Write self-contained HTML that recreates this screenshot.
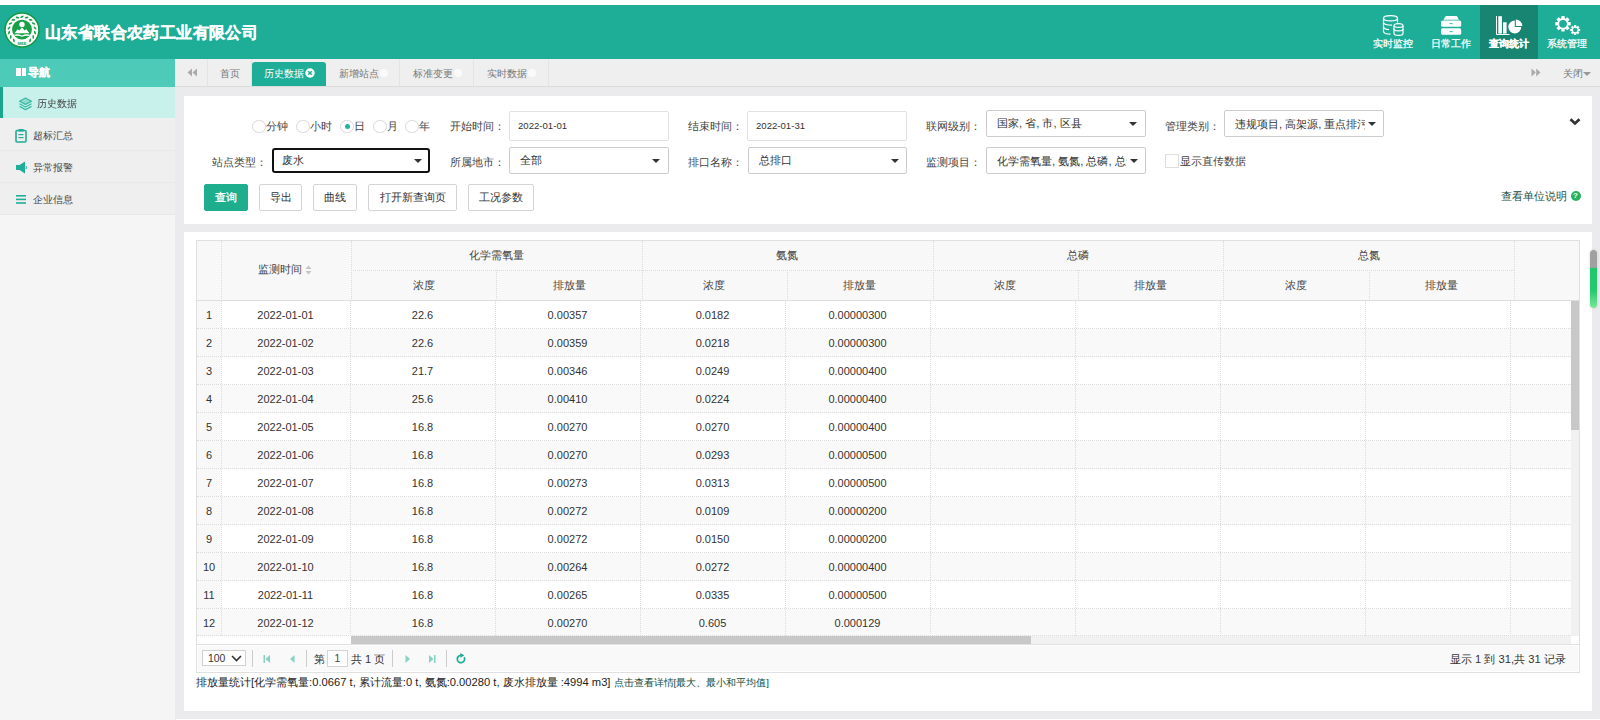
<!DOCTYPE html><html><head><meta charset="utf-8"><title>历史数据</title><style>
*{box-sizing:border-box;margin:0;padding:0}
html,body{width:1600px;height:720px;overflow:hidden;background:#ebebed;font-family:"Liberation Sans",sans-serif;color:#333}
.a{position:absolute}
.t{position:absolute;white-space:nowrap;line-height:1}
#top{left:0;top:0;width:1600px;height:5px;background:#fff}
#hdr{left:0;top:5px;width:1600px;height:54px;background:#1eae98}
#title{left:45px;top:20px;font-size:16px;font-weight:bold;color:#fff;letter-spacing:0.4px;-webkit-text-stroke:0.3px #fff}
.menu{position:absolute;top:0;width:58px;height:54px;color:#fff;text-align:center}
.menu .lbl{position:absolute;left:0;width:58px;top:33px;font-size:10.4px;line-height:11px;-webkit-text-stroke:0.25px #fff}
.menu svg{position:absolute;left:0;top:0}
#side{left:0;top:59px;width:175px;height:661px;background:#efefef}
#navh{left:0;top:59px;width:175px;height:28px;background:#4dcab8;color:#fff;font-weight:bold;font-size:11px}
.sitem{position:absolute;left:0;width:175px;height:32px;border-bottom:1px solid #e8e8e8;font-size:9.6px;color:#444}
#tabbar{left:175px;top:59px;width:1425px;height:28px;background:#efefef;border-bottom:1px solid #dcdcdc}
.tab{position:absolute;top:0;height:27px;font-size:9.6px;color:#777;border-right:1px solid #e4e4e4}
.panel{position:absolute;background:#fff;border-radius:1px}
.lab{position:absolute;font-size:11.2px;color:#444;white-space:nowrap;line-height:1}
.inp{position:absolute;background:#fff;border:1px solid #e1e1e1;border-radius:2px;font-size:11.2px;color:#333}
.inp span{position:absolute;left:8px;top:50%;transform:translateY(-50%);white-space:nowrap;line-height:1}
.caret{position:absolute;width:0;height:0;border-left:4px solid transparent;border-right:4px solid transparent;border-top:4px solid #333}
.btn{position:absolute;top:184px;height:27px;background:#fff;border:1px solid #d5d5d5;border-radius:2px;font-size:11.2px;color:#333;text-align:center;line-height:25px;white-space:nowrap}
.radio{position:absolute;top:119.5px;width:13.5px;height:13.5px;border:1px solid #d8d8d8;border-radius:50%;background:#fff}
#tbl{left:196px;top:240px;width:1384px;height:433px;border:1px solid #e0e0e0}
.th{position:absolute;background:#f8f8f8;font-size:11.2px;color:#444;text-align:center;white-space:nowrap}
.vl{position:absolute;width:0;border-left:1px dotted #dcdcdc}
.hl{position:absolute;height:0;border-top:1px dotted #dcdcdc}
.td{position:absolute;font-size:11px;color:#333;text-align:center;white-space:nowrap;line-height:1}
</style></head><body>
<div class="a" id="top"></div>
<div class="a" id="hdr">
<svg class="a" style="left:4px;top:7.4px" width="36" height="36" viewBox="0 0 36 36">
<circle cx="18" cy="18" r="17" fill="#fff" stroke="#149a42" stroke-width="1.6"/>
<circle cx="18" cy="17.6" r="9.9" fill="#18a048"/>
<circle cx="18" cy="12.4" r="2.7" fill="#fff"/>
<path d="M10.6 21.3 L13.6 17.2 L15.4 18.5 L18 15.3 L20.6 18.5 L22.4 17.2 L25.4 21.3 Z" fill="#fff"/>
<path d="M10.2 22.8 Q14 21.6 18 23.4 Q22 21.6 25.8 22.8 L25.3 24 Q22 23 18 24.8 Q14 23 10.7 24 Z" fill="#fff"/>
<ellipse cx="9.87" cy="28.40" rx="1.9" ry="0.85" transform="rotate(253.0 9.87 28.40)" fill="#18a048"/><ellipse cx="6.77" cy="24.94" rx="1.9" ry="0.85" transform="rotate(273.3 6.77 24.94)" fill="#18a048"/><ellipse cx="5.06" cy="20.62" rx="1.9" ry="0.85" transform="rotate(293.6 5.06 20.62)" fill="#18a048"/><ellipse cx="4.96" cy="15.97" rx="1.9" ry="0.85" transform="rotate(313.9 4.96 15.97)" fill="#18a048"/><ellipse cx="6.47" cy="11.57" rx="1.9" ry="0.85" transform="rotate(334.1 6.47 11.57)" fill="#18a048"/><ellipse cx="9.41" cy="7.97" rx="1.9" ry="0.85" transform="rotate(354.4 9.41 7.97)" fill="#18a048"/><ellipse cx="13.42" cy="5.62" rx="1.9" ry="0.85" transform="rotate(374.7 13.42 5.62)" fill="#18a048"/><ellipse cx="18.00" cy="4.80" rx="1.9" ry="0.85" transform="rotate(325.0 18.00 4.80)" fill="#18a048"/><ellipse cx="22.58" cy="5.62" rx="1.9" ry="0.85" transform="rotate(345.3 22.58 5.62)" fill="#18a048"/><ellipse cx="26.59" cy="7.97" rx="1.9" ry="0.85" transform="rotate(365.6 26.59 7.97)" fill="#18a048"/><ellipse cx="29.53" cy="11.57" rx="1.9" ry="0.85" transform="rotate(385.9 29.53 11.57)" fill="#18a048"/><ellipse cx="31.04" cy="15.97" rx="1.9" ry="0.85" transform="rotate(406.1 31.04 15.97)" fill="#18a048"/><ellipse cx="30.94" cy="20.62" rx="1.9" ry="0.85" transform="rotate(426.4 30.94 20.62)" fill="#18a048"/><ellipse cx="29.23" cy="24.94" rx="1.9" ry="0.85" transform="rotate(446.7 29.23 24.94)" fill="#18a048"/><ellipse cx="26.13" cy="28.40" rx="1.9" ry="0.85" transform="rotate(467.0 26.13 28.40)" fill="#18a048"/>
<text x="18" y="33" font-size="4.2" text-anchor="middle" fill="#18a048" font-weight="bold" font-family="Liberation Sans">MEE</text>
</svg>
<div class="t" id="title">山东省联合农药工业有限公司</div>
<div class="menu" style="left:1364px;"><svg width="58" height="54" viewBox="0 0 58 54"><g fill="none" stroke="#fff" stroke-width="1.2">
<ellipse cx="26.5" cy="13.3" rx="7" ry="2.6"/>
<path d="M19.5 13.3 V26.5 Q19.5 29 26.5 29.2"/>
<path d="M33.5 13.3 V17.5"/>
<path d="M19.5 17.8 Q20.5 20.3 28 20.2"/>
<path d="M19.5 22.3 Q20.5 24.6 25 24.6"/>
<ellipse cx="34.5" cy="20.5" rx="4.5" ry="1.9" fill="#1eae98"/>
<path d="M30 20.5 V28.5 Q30 30.4 34.5 30.4 Q39 30.4 39 28.5 V20.5"/>
<path d="M30 24 Q30 25.9 34.5 25.9 Q39 25.9 39 24"/>
</g></svg><div class="lbl" style="">实时监控</div></div>
<div class="menu" style="left:1422px;"><svg width="58" height="54" viewBox="0 0 58 54"><g fill="#fff">
<path d="M21.6 14.7 L23 11.9 Q23.5 11 24.6 11 H33.9 Q35 11 35.5 11.9 L36.9 14.7 Z"/>
<rect x="19" y="15.4" width="20.2" height="6.4" rx="1.6"/>
<rect x="19" y="23.3" width="20.2" height="6.5" rx="1.6"/>
<rect x="27.6" y="18.2" width="3" height="0.9" fill="#1eae98"/>
<rect x="27.6" y="26.2" width="3" height="0.9" fill="#1eae98"/>
</g></svg><div class="lbl" style="">日常工作</div></div>
<div class="menu" style="left:1480px;background:#178572;"><svg width="58" height="54" viewBox="0 0 58 54"><g fill="#fff">
<path d="M16.5 11 V29.5 H29.5" fill="none" stroke="#fff" stroke-width="1"/>
<rect x="18.3" y="11.2" width="3.6" height="17.4"/>
<rect x="23" y="17.3" width="3.6" height="11.3"/>
<path d="M34.8 22 V15.5 A6.5 6.5 0 1 0 41.3 22 Z"/>
<path d="M35.8 21 V14.5 A6.5 6.5 0 0 1 42.3 21 Z"/>
</g></svg><div class="lbl" style="font-weight:bold;">查询统计</div></div>
<div class="menu" style="left:1538px;"><svg width="58" height="54" viewBox="0 0 58 54"><g><path d="M30.20 17.00 L32.75 17.26 L32.75 20.34 L30.20 20.60 L30.08 20.90 L29.95 21.20 L31.57 23.19 L29.39 25.37 L27.40 23.75 L27.10 23.88 L26.80 24.00 L26.54 26.55 L23.46 26.55 L23.20 24.00 L22.90 23.88 L22.60 23.75 L20.61 25.37 L18.43 23.19 L20.05 21.20 L19.92 20.90 L19.80 20.60 L17.25 20.34 L17.25 17.26 L19.80 17.00 L19.92 16.70 L20.05 16.40 L18.43 14.41 L20.61 12.23 L22.60 13.85 L22.90 13.72 L23.20 13.60 L23.46 11.05 L26.54 11.05 L26.80 13.60 L27.10 13.72 L27.40 13.85 L29.39 12.23 L31.57 14.41 L29.95 16.40 L30.08 16.70 Z" fill="#fff"/><circle cx="25" cy="18.8" r="3.9" fill="#1eae98"/><path d="M40.51 23.85 L42.20 24.01 L42.20 25.99 L40.51 26.15 L40.43 26.34 L40.35 26.53 L41.44 27.83 L40.03 29.24 L38.73 28.15 L38.54 28.23 L38.35 28.31 L38.19 30.00 L36.21 30.00 L36.05 28.31 L35.86 28.23 L35.67 28.15 L34.37 29.24 L32.96 27.83 L34.05 26.53 L33.97 26.34 L33.89 26.15 L32.20 25.99 L32.20 24.01 L33.89 23.85 L33.97 23.66 L34.05 23.47 L32.96 22.17 L34.37 20.76 L35.67 21.85 L35.86 21.77 L36.05 21.69 L36.21 20.00 L38.19 20.00 L38.35 21.69 L38.54 21.77 L38.73 21.85 L40.03 20.76 L41.44 22.17 L40.35 23.47 L40.43 23.66 Z" fill="#fff"/><circle cx="37.2" cy="25" r="2.3" fill="#1eae98"/></g></svg><div class="lbl" style="">系统管理</div></div>
</div>
<div class="a" id="side"></div>
<div class="a" id="navh"><div class="a" style="left:16px;top:9px;width:4.5px;height:8px;background:#fff"></div><div class="a" style="left:21.5px;top:9px;width:4px;height:8px;background:#fff"></div><div class="t" style="left:28px;top:8px;font-size:11.2px;-webkit-text-stroke:0.35px #fff">导航</div></div>
<div class="sitem" style="top:87px;height:31px;background:#c8f1eb;border-bottom:none"><div class="a" style="left:0;top:0;width:3px;height:31px;background:#1aa68e"></div>
<svg class="a" style="left:17.5px;top:9.5px" width="15" height="14" viewBox="0 0 15 14"><g stroke="#3cb8a2" stroke-width="1.2" stroke-linejoin="round"><path d="M7.5 1 L13.5 4.2 L7.5 7.4 L1.5 4.2 Z" fill="#8fdccd"/><path d="M1.5 6.8 L7.5 10 L13.5 6.8" fill="none"/><path d="M1.5 9.4 L7.5 12.6 L13.5 9.4" fill="none"/></g></svg>
<div class="t" style="left:37px;top:98.5px;position:fixed;font-size:9.6px">历史数据</div></div>
<div class="sitem" style="top:118px;height:33px"><div class="t" style="left:33px;top:12.5px">超标汇总</div>
<svg class="a" style="left:14.5px;top:11px" width="12" height="14" viewBox="0 0 12 14"><rect x="1" y="1.5" width="10" height="11.5" rx="1" fill="none" stroke="#1fae98" stroke-width="1.6"/><rect x="3.5" y="0" width="5" height="2.6" fill="#1fae98"/><rect x="3.5" y="5" width="5" height="1.2" fill="#1fae98"/><rect x="3.5" y="8" width="5" height="1.2" fill="#1fae98"/></svg>
</div>
<div class="sitem" style="top:151px;height:32px"><div class="t" style="left:33px;top:11.5px">异常报警</div>
<svg class="a" style="left:14.5px;top:10px" width="13" height="13" viewBox="0 0 13 13"><path d="M1 4 H4.5 L10 0.5 V12.5 L4.5 9 H1 Z" fill="#1fae98"/><path d="M11 5 Q12.2 6.5 11 8" fill="none" stroke="#1fae98" stroke-width="1"/></svg>
</div>
<div class="sitem" style="top:183px;height:32px"><div class="t" style="left:33px;top:11.5px">企业信息</div>
<svg class="a" style="left:16px;top:12px" width="10" height="9" viewBox="0 0 10 9"><rect x="0" y="0" width="10" height="1.6" fill="#1fae98"/><rect x="0" y="3.6" width="10" height="1.6" fill="#1fae98"/><rect x="0" y="7.2" width="10" height="1.6" fill="#1fae98"/></svg>
</div>
<div class="a" style="left:0;top:215px;width:175px;height:505px;background:#f5f5f5"></div>
<div class="a" id="tabbar">
<div class="tab" style="left:0;width:33px"><svg class="a" style="left:12px;top:9px" width="11" height="9" viewBox="0 0 11 9"><path d="M5 0.5 L0.5 4.5 L5 8.5 Z M10 0.5 L5.5 4.5 L10 8.5 Z" fill="#aaa"/></svg></div>
<div class="tab" style="left:33px;width:44px"><div class="t" style="left:12px;top:10px">首页</div></div>
<div class="tab" style="left:77px;width:74px;top:3px;height:24px;background:#1eae98;color:#fff;border-radius:3px 3px 0 0;border-right:none"><div class="t" style="left:12px;top:7px">历史数据</div><svg class="a" style="left:53px;top:5.6px" width="10" height="10" viewBox="0 0 10 10"><circle cx="5" cy="5" r="4.7" fill="#fff"/><path d="M3.2 3.2 L6.8 6.8 M6.8 3.2 L3.2 6.8" stroke="#1eae98" stroke-width="1.5"/></svg></div>
<div class="tab" style="left:151px;width:74px"><div class="t" style="left:12.5px;top:10px">新增站点</div><div class="a" style="left:54px;top:10px;width:8px;height:8px;border-radius:50%;background:#fafafa"></div></div>
<div class="tab" style="left:225px;width:74px"><div class="t" style="left:12.5px;top:10px">标准变更</div><div class="a" style="left:54px;top:10px;width:8px;height:8px;border-radius:50%;background:#fafafa"></div></div>
<div class="tab" style="left:299px;width:75px"><div class="t" style="left:12.5px;top:10px">实时数据</div><div class="a" style="left:54px;top:10px;width:8px;height:8px;border-radius:50%;background:#fafafa"></div></div>
<svg class="a" style="left:1356px;top:9px" width="10" height="9" viewBox="0 0 10 9"><path d="M0.5 0.5 L4.8 4.5 L0.5 8.5 Z M5.2 0.5 L9.5 4.5 L5.2 8.5 Z" fill="#aaa"/></svg>
<div class="t" style="left:1388px;top:10px;font-size:9.6px;color:#777">关闭</div><div class="caret" style="left:1408px;top:12.5px;border-top-color:#999"></div>
</div>
<div class="panel" style="left:184px;top:96px;width:1408px;height:128px"></div>
<div class="radio" style="left:252px"></div><div class="lab" style="left:266px;top:121px">分钟</div>
<div class="radio" style="left:296px"></div><div class="lab" style="left:310px;top:121px">小时</div>
<div class="radio" style="left:340px"></div><div class="lab" style="left:354px;top:121px">日</div>
<div class="radio" style="left:373px"></div><div class="lab" style="left:387px;top:121px">月</div>
<div class="radio" style="left:405px"></div><div class="lab" style="left:419px;top:121px">年</div>
<div class="a" style="left:344.5px;top:123.8px;width:5px;height:5px;border-radius:50%;background:#22b5a3"></div>
<div class="lab" style="left:450px;top:121px">开始时间：</div>
<div class="lab" style="left:688px;top:121px">结束时间：</div>
<div class="lab" style="left:926px;top:121px">联网级别：</div>
<div class="lab" style="left:1165px;top:121px">管理类别：</div>
<div class="lab" style="left:212px;top:157px">站点类型：</div>
<div class="lab" style="left:450px;top:157px">所属地市：</div>
<div class="lab" style="left:688px;top:157px">排口名称：</div>
<div class="lab" style="left:926px;top:157px">监测项目：</div>
<div class="inp" style="left:509px;top:111px;width:160px;height:30px"><span style="font-size:9.6px">2022-01-01</span></div>
<div class="inp" style="left:747px;top:111px;width:160px;height:30px"><span style="font-size:9.6px">2022-01-31</span></div>
<div class="inp" style="left:986px;top:110px;width:160px;height:27px;border-color:#ccc"><span style="left:10px">国家, 省, 市, 区县</span><div class="caret" style="left:142px;top:11px"></div></div>
<div class="inp" style="left:1224px;top:110px;width:160px;height:27px;border-color:#ccc"><span style="left:10px;width:130px;overflow:hidden;line-height:13px">违规项目, 高架源, 重点排污</span><div class="caret" style="left:143px;top:11px"></div></div>
<div class="inp" style="left:272px;top:148px;width:158px;height:25px;border:2px solid #111;border-radius:3px"><span style="left:8px">废水</span><div class="caret" style="left:140px;top:9px"></div></div>
<div class="inp" style="left:509px;top:147px;width:160px;height:27px;border-color:#ccc"><span style="left:10px">全部</span><div class="caret" style="left:142px;top:11px"></div></div>
<div class="inp" style="left:748px;top:147px;width:159px;height:27px;border-color:#ccc"><span style="left:10px">总排口</span><div class="caret" style="left:142px;top:11px"></div></div>
<div class="inp" style="left:986px;top:147px;width:160px;height:27px;border-color:#ccc"><span style="left:10px;width:130px;overflow:hidden;line-height:13px">化学需氧量, 氨氮, 总磷, 总氮</span><div class="caret" style="left:143px;top:11px"></div></div>
<div class="a" style="left:1165px;top:154px;width:14px;height:14px;border:1px solid #ddd;background:#fff"></div><div class="lab" style="left:1180px;top:156px">显示直传数据</div>
<svg class="a" style="left:1569px;top:117px" width="12" height="9" viewBox="0 0 12 9"><path d="M1.5 2.2 L6 6.4 L10.5 2.2" fill="none" stroke="#333" stroke-width="2.8"/></svg>
<div class="lab" style="left:1501px;top:191px;color:#164f46">查看单位说明</div><div class="a" style="left:1570.5px;top:191px;width:10px;height:10px;border-radius:50%;background:#27b35d;color:#fff;font-size:8px;line-height:10px;text-align:center;font-weight:bold">?</div>
<div class="btn" style="left:204px;width:44px;background:#1eae8e;border-color:#1eae8e;color:#fff;-webkit-text-stroke:0.3px #fff;">查询</div>
<div class="btn" style="left:259px;width:43px;">导出</div>
<div class="btn" style="left:313px;width:44px;">曲线</div>
<div class="btn" style="left:368px;width:89px;">打开新查询页</div>
<div class="btn" style="left:468px;width:66px;">工况参数</div>
<div class="panel" style="left:184px;top:232px;width:1408px;height:479px"></div>
<div class="a" id="tbl"></div>
<div class="a" style="left:197px;top:241px;width:1382px;height:60px;background:#f8f8f8;border-bottom:1px solid #dedede"></div>
<div class="vl" style="left:221px;top:241px;height:60px"></div>
<div class="vl" style="left:351.0px;top:241px;height:60px"></div>
<div class="vl" style="left:496.4px;top:270px;height:31px"></div>
<div class="vl" style="left:641.8px;top:241px;height:60px"></div>
<div class="vl" style="left:787.2px;top:270px;height:31px"></div>
<div class="vl" style="left:932.6px;top:241px;height:60px"></div>
<div class="vl" style="left:1078.0px;top:270px;height:31px"></div>
<div class="vl" style="left:1223.4px;top:241px;height:60px"></div>
<div class="vl" style="left:1368.8px;top:270px;height:31px"></div>
<div class="vl" style="left:1514.2px;top:241px;height:60px"></div>
<div class="hl" style="left:351px;top:270px;width:1163.2px"></div>
<div class="th" style="left:222px;top:264px;width:129px;line-height:11px;background:none;text-align:left;padding-left:36px">监测时间</div>
<svg class="a" style="left:305px;top:265px" width="7" height="10" viewBox="0 0 7 10"><path d="M3.5 0.5 L6.5 4 H0.5 Z M3.5 9.5 L6.5 6 H0.5 Z" fill="#c4c4c4"/></svg>
<div class="th" style="left:351.0px;top:250px;width:290.8px;background:none;line-height:11px">化学需氧量</div>
<div class="th" style="left:351.0px;top:280px;width:145.4px;background:none;line-height:11px">浓度</div>
<div class="th" style="left:496.4px;top:280px;width:145.4px;background:none;line-height:11px">排放量</div>
<div class="th" style="left:641.8px;top:250px;width:290.8px;background:none;line-height:11px">氨氮</div>
<div class="th" style="left:641.8px;top:280px;width:145.4px;background:none;line-height:11px">浓度</div>
<div class="th" style="left:787.2px;top:280px;width:145.4px;background:none;line-height:11px">排放量</div>
<div class="th" style="left:932.6px;top:250px;width:290.8px;background:none;line-height:11px">总磷</div>
<div class="th" style="left:932.6px;top:280px;width:145.4px;background:none;line-height:11px">浓度</div>
<div class="th" style="left:1078.0px;top:280px;width:145.4px;background:none;line-height:11px">排放量</div>
<div class="th" style="left:1223.4px;top:250px;width:290.8px;background:none;line-height:11px">总氮</div>
<div class="th" style="left:1223.4px;top:280px;width:145.4px;background:none;line-height:11px">浓度</div>
<div class="th" style="left:1368.8px;top:280px;width:145.4px;background:none;line-height:11px">排放量</div>
<div class="a" style="left:197px;top:301px;width:1374px;height:28px;background:#fff"></div>
<div class="a" style="left:197px;top:301px;width:24px;height:28px;background:#f8f8f8"></div>
<div class="a" style="left:197px;top:329px;width:1374px;height:28px;background:#f9f9f9"></div>
<div class="a" style="left:197px;top:329px;width:24px;height:28px;background:#f8f8f8"></div>
<div class="a" style="left:197px;top:357px;width:1374px;height:28px;background:#fff"></div>
<div class="a" style="left:197px;top:357px;width:24px;height:28px;background:#f8f8f8"></div>
<div class="a" style="left:197px;top:385px;width:1374px;height:28px;background:#f9f9f9"></div>
<div class="a" style="left:197px;top:385px;width:24px;height:28px;background:#f8f8f8"></div>
<div class="a" style="left:197px;top:413px;width:1374px;height:28px;background:#fff"></div>
<div class="a" style="left:197px;top:413px;width:24px;height:28px;background:#f8f8f8"></div>
<div class="a" style="left:197px;top:441px;width:1374px;height:28px;background:#f9f9f9"></div>
<div class="a" style="left:197px;top:441px;width:24px;height:28px;background:#f8f8f8"></div>
<div class="a" style="left:197px;top:469px;width:1374px;height:28px;background:#fff"></div>
<div class="a" style="left:197px;top:469px;width:24px;height:28px;background:#f8f8f8"></div>
<div class="a" style="left:197px;top:497px;width:1374px;height:28px;background:#f9f9f9"></div>
<div class="a" style="left:197px;top:497px;width:24px;height:28px;background:#f8f8f8"></div>
<div class="a" style="left:197px;top:525px;width:1374px;height:28px;background:#fff"></div>
<div class="a" style="left:197px;top:525px;width:24px;height:28px;background:#f8f8f8"></div>
<div class="a" style="left:197px;top:553px;width:1374px;height:28px;background:#f9f9f9"></div>
<div class="a" style="left:197px;top:553px;width:24px;height:28px;background:#f8f8f8"></div>
<div class="a" style="left:197px;top:581px;width:1374px;height:28px;background:#fff"></div>
<div class="a" style="left:197px;top:581px;width:24px;height:28px;background:#f8f8f8"></div>
<div class="a" style="left:197px;top:609px;width:1374px;height:27px;background:#f9f9f9"></div>
<div class="a" style="left:197px;top:609px;width:24px;height:27px;background:#f8f8f8"></div>
<div class="a" style="left:197px;top:637px;width:1374px;height:-1px;background:#fff"></div>
<div class="a" style="left:197px;top:637px;width:24px;height:-1px;background:#f8f8f8"></div>
<div class="hl" style="left:197px;top:328px;width:1374px"></div>
<div class="hl" style="left:197px;top:356px;width:1374px"></div>
<div class="hl" style="left:197px;top:384px;width:1374px"></div>
<div class="hl" style="left:197px;top:412px;width:1374px"></div>
<div class="hl" style="left:197px;top:440px;width:1374px"></div>
<div class="hl" style="left:197px;top:468px;width:1374px"></div>
<div class="hl" style="left:197px;top:496px;width:1374px"></div>
<div class="hl" style="left:197px;top:524px;width:1374px"></div>
<div class="hl" style="left:197px;top:552px;width:1374px"></div>
<div class="hl" style="left:197px;top:580px;width:1374px"></div>
<div class="hl" style="left:197px;top:608px;width:1374px"></div>
<div class="hl" style="left:197px;top:635px;width:1374px"></div>
<div class="vl" style="left:221px;top:301px;height:335px"></div>
<div class="vl" style="left:350px;top:301px;height:335px"></div>
<div class="vl" style="left:495px;top:301px;height:335px"></div>
<div class="vl" style="left:640px;top:301px;height:335px"></div>
<div class="vl" style="left:785px;top:301px;height:335px"></div>
<div class="vl" style="left:930px;top:301px;height:335px"></div>
<div class="vl" style="left:1075px;top:301px;height:335px"></div>
<div class="vl" style="left:1220px;top:301px;height:335px"></div>
<div class="vl" style="left:1365px;top:301px;height:335px"></div>
<div class="vl" style="left:1510px;top:301px;height:335px"></div>
<div class="td" style="left:197px;top:310px;width:24px">1</div>
<div class="td" style="left:221px;top:310px;width:129px">2022-01-01</div>
<div class="td" style="left:350px;top:310px;width:145px">22.6</div>
<div class="td" style="left:495px;top:310px;width:145px">0.00357</div>
<div class="td" style="left:640px;top:310px;width:145px">0.0182</div>
<div class="td" style="left:785px;top:310px;width:145px">0.00000300</div>
<div class="td" style="left:197px;top:338px;width:24px">2</div>
<div class="td" style="left:221px;top:338px;width:129px">2022-01-02</div>
<div class="td" style="left:350px;top:338px;width:145px">22.6</div>
<div class="td" style="left:495px;top:338px;width:145px">0.00359</div>
<div class="td" style="left:640px;top:338px;width:145px">0.0218</div>
<div class="td" style="left:785px;top:338px;width:145px">0.00000300</div>
<div class="td" style="left:197px;top:366px;width:24px">3</div>
<div class="td" style="left:221px;top:366px;width:129px">2022-01-03</div>
<div class="td" style="left:350px;top:366px;width:145px">21.7</div>
<div class="td" style="left:495px;top:366px;width:145px">0.00346</div>
<div class="td" style="left:640px;top:366px;width:145px">0.0249</div>
<div class="td" style="left:785px;top:366px;width:145px">0.00000400</div>
<div class="td" style="left:197px;top:394px;width:24px">4</div>
<div class="td" style="left:221px;top:394px;width:129px">2022-01-04</div>
<div class="td" style="left:350px;top:394px;width:145px">25.6</div>
<div class="td" style="left:495px;top:394px;width:145px">0.00410</div>
<div class="td" style="left:640px;top:394px;width:145px">0.0224</div>
<div class="td" style="left:785px;top:394px;width:145px">0.00000400</div>
<div class="td" style="left:197px;top:422px;width:24px">5</div>
<div class="td" style="left:221px;top:422px;width:129px">2022-01-05</div>
<div class="td" style="left:350px;top:422px;width:145px">16.8</div>
<div class="td" style="left:495px;top:422px;width:145px">0.00270</div>
<div class="td" style="left:640px;top:422px;width:145px">0.0270</div>
<div class="td" style="left:785px;top:422px;width:145px">0.00000400</div>
<div class="td" style="left:197px;top:450px;width:24px">6</div>
<div class="td" style="left:221px;top:450px;width:129px">2022-01-06</div>
<div class="td" style="left:350px;top:450px;width:145px">16.8</div>
<div class="td" style="left:495px;top:450px;width:145px">0.00270</div>
<div class="td" style="left:640px;top:450px;width:145px">0.0293</div>
<div class="td" style="left:785px;top:450px;width:145px">0.00000500</div>
<div class="td" style="left:197px;top:478px;width:24px">7</div>
<div class="td" style="left:221px;top:478px;width:129px">2022-01-07</div>
<div class="td" style="left:350px;top:478px;width:145px">16.8</div>
<div class="td" style="left:495px;top:478px;width:145px">0.00273</div>
<div class="td" style="left:640px;top:478px;width:145px">0.0313</div>
<div class="td" style="left:785px;top:478px;width:145px">0.00000500</div>
<div class="td" style="left:197px;top:506px;width:24px">8</div>
<div class="td" style="left:221px;top:506px;width:129px">2022-01-08</div>
<div class="td" style="left:350px;top:506px;width:145px">16.8</div>
<div class="td" style="left:495px;top:506px;width:145px">0.00272</div>
<div class="td" style="left:640px;top:506px;width:145px">0.0109</div>
<div class="td" style="left:785px;top:506px;width:145px">0.00000200</div>
<div class="td" style="left:197px;top:534px;width:24px">9</div>
<div class="td" style="left:221px;top:534px;width:129px">2022-01-09</div>
<div class="td" style="left:350px;top:534px;width:145px">16.8</div>
<div class="td" style="left:495px;top:534px;width:145px">0.00272</div>
<div class="td" style="left:640px;top:534px;width:145px">0.0150</div>
<div class="td" style="left:785px;top:534px;width:145px">0.00000200</div>
<div class="td" style="left:197px;top:562px;width:24px">10</div>
<div class="td" style="left:221px;top:562px;width:129px">2022-01-10</div>
<div class="td" style="left:350px;top:562px;width:145px">16.8</div>
<div class="td" style="left:495px;top:562px;width:145px">0.00264</div>
<div class="td" style="left:640px;top:562px;width:145px">0.0272</div>
<div class="td" style="left:785px;top:562px;width:145px">0.00000400</div>
<div class="td" style="left:197px;top:590px;width:24px">11</div>
<div class="td" style="left:221px;top:590px;width:129px">2022-01-11</div>
<div class="td" style="left:350px;top:590px;width:145px">16.8</div>
<div class="td" style="left:495px;top:590px;width:145px">0.00265</div>
<div class="td" style="left:640px;top:590px;width:145px">0.0335</div>
<div class="td" style="left:785px;top:590px;width:145px">0.00000500</div>
<div class="td" style="left:197px;top:618px;width:24px">12</div>
<div class="td" style="left:221px;top:618px;width:129px">2022-01-12</div>
<div class="td" style="left:350px;top:618px;width:145px">16.8</div>
<div class="td" style="left:495px;top:618px;width:145px">0.00270</div>
<div class="td" style="left:640px;top:618px;width:145px">0.605</div>
<div class="td" style="left:785px;top:618px;width:145px">0.000129</div>
<div class="a" style="left:1571px;top:301px;width:8px;height:335px;background:#f1f1f1"></div>
<div class="a" style="left:1571px;top:301px;width:8px;height:129px;background:#c8c8c8"></div>
<div class="a" style="left:197px;top:636px;width:1374px;height:8px;background:#f1f1f1"></div>
<div class="a" style="left:351px;top:636px;width:680px;height:8px;background:#c8c8c8"></div>
<div class="a" style="left:197px;top:636px;width:154px;height:8px;background:#fff"></div>
<div class="a" style="left:1571px;top:636px;width:8px;height:8px;background:#fff"></div>
<div class="a" style="left:196px;top:644px;width:1384px;height:28.5px;background:#f9f9f9;border:1px solid #e0e0e0;box-shadow:inset 0 0 0 1px #fff"></div>
<div class="a" style="left:202px;top:650px;width:44px;height:16px;background:#fff;border:1px solid #d0d0d0;font-size:10.4px;line-height:16px;padding-left:5px;color:#333">100</div>
<svg class="a" style="left:231px;top:654.5px" width="11" height="7" viewBox="0 0 11 7"><path d="M1 1 L5.5 5.5 L10 1" fill="none" stroke="#333" stroke-width="1.6"/></svg>
<div class="a" style="left:252px;top:650px;width:1px;height:17px;background:#ccc"></div>
<div class="a" style="left:306px;top:650px;width:1px;height:17px;background:#ccc"></div>
<div class="a" style="left:392px;top:650px;width:1px;height:17px;background:#ccc"></div>
<div class="a" style="left:446px;top:650px;width:1px;height:17px;background:#ccc"></div>
<svg class="a" style="left:263px;top:654px" width="8" height="10" viewBox="0 0 8 10"><rect x="0.5" y="1" width="1.5" height="8" fill="#86d3c4"/><path d="M7 1 L2.5 5 L7 9 Z" fill="#86d3c4"/></svg>
<svg class="a" style="left:289px;top:654px" width="6" height="10" viewBox="0 0 6 10"><path d="M5.5 1 L1 5 L5.5 9 Z" fill="#86d3c4"/></svg>
<div class="t" style="left:314px;top:654px;font-size:11.2px;color:#333">第</div>
<div class="a" style="left:327px;top:650px;width:21px;height:17px;background:#fff;border:1px solid #d5d5d5;font-size:10.4px;line-height:16px;text-align:center;color:#444">1</div>
<div class="t" style="left:351px;top:654px;font-size:11.2px;color:#333">共 1 页</div>
<svg class="a" style="left:405px;top:654px" width="6" height="10" viewBox="0 0 6 10"><path d="M0.5 1 L5 5 L0.5 9 Z" fill="#86d3c4"/></svg>
<svg class="a" style="left:428px;top:654px" width="8" height="10" viewBox="0 0 8 10"><path d="M1 1 L5.5 5 L1 9 Z" fill="#86d3c4"/><rect x="6" y="1" width="1.5" height="8" fill="#86d3c4"/></svg>
<svg class="a" style="left:455px;top:653px" width="12" height="12" viewBox="0 0 12 12"><path d="M9.2 4.2 A3.7 3.7 0 1 1 6 2.3" fill="none" stroke="#1eae98" stroke-width="1.7"/><path d="M5.2 0 L9.4 2.3 L5.6 4.8 Z" fill="#1eae98"/></svg>
<div class="t" style="left:1450px;top:654px;font-size:11.2px;color:#333">显示 1 到 31,共 31 记录</div>
<div class="t" style="left:196px;top:677px;font-size:11.2px;color:#222">排放量统计[化学需氧量:0.0667 t, 累计流量:0 t, 氨氮:0.00280 t, 废水排放量 :4994 m3] <span style="font-size:9.6px;color:#0f4a38">点击查看详情[最大、最小和平均值]</span></div>
<div class="a" style="left:1590px;top:250px;width:7px;height:58px;border-radius:4px;background:linear-gradient(#a0a0a0 0,#a0a0a0 30%,#1fc76c 31%,#25c96f 70%,#7ee69b 100%);box-shadow:0 0 3px rgba(0,0,0,.15)"></div>
<div class="a" style="left:176px;top:719px;width:1424px;height:1px;background:#fff"></div>
</body></html>
